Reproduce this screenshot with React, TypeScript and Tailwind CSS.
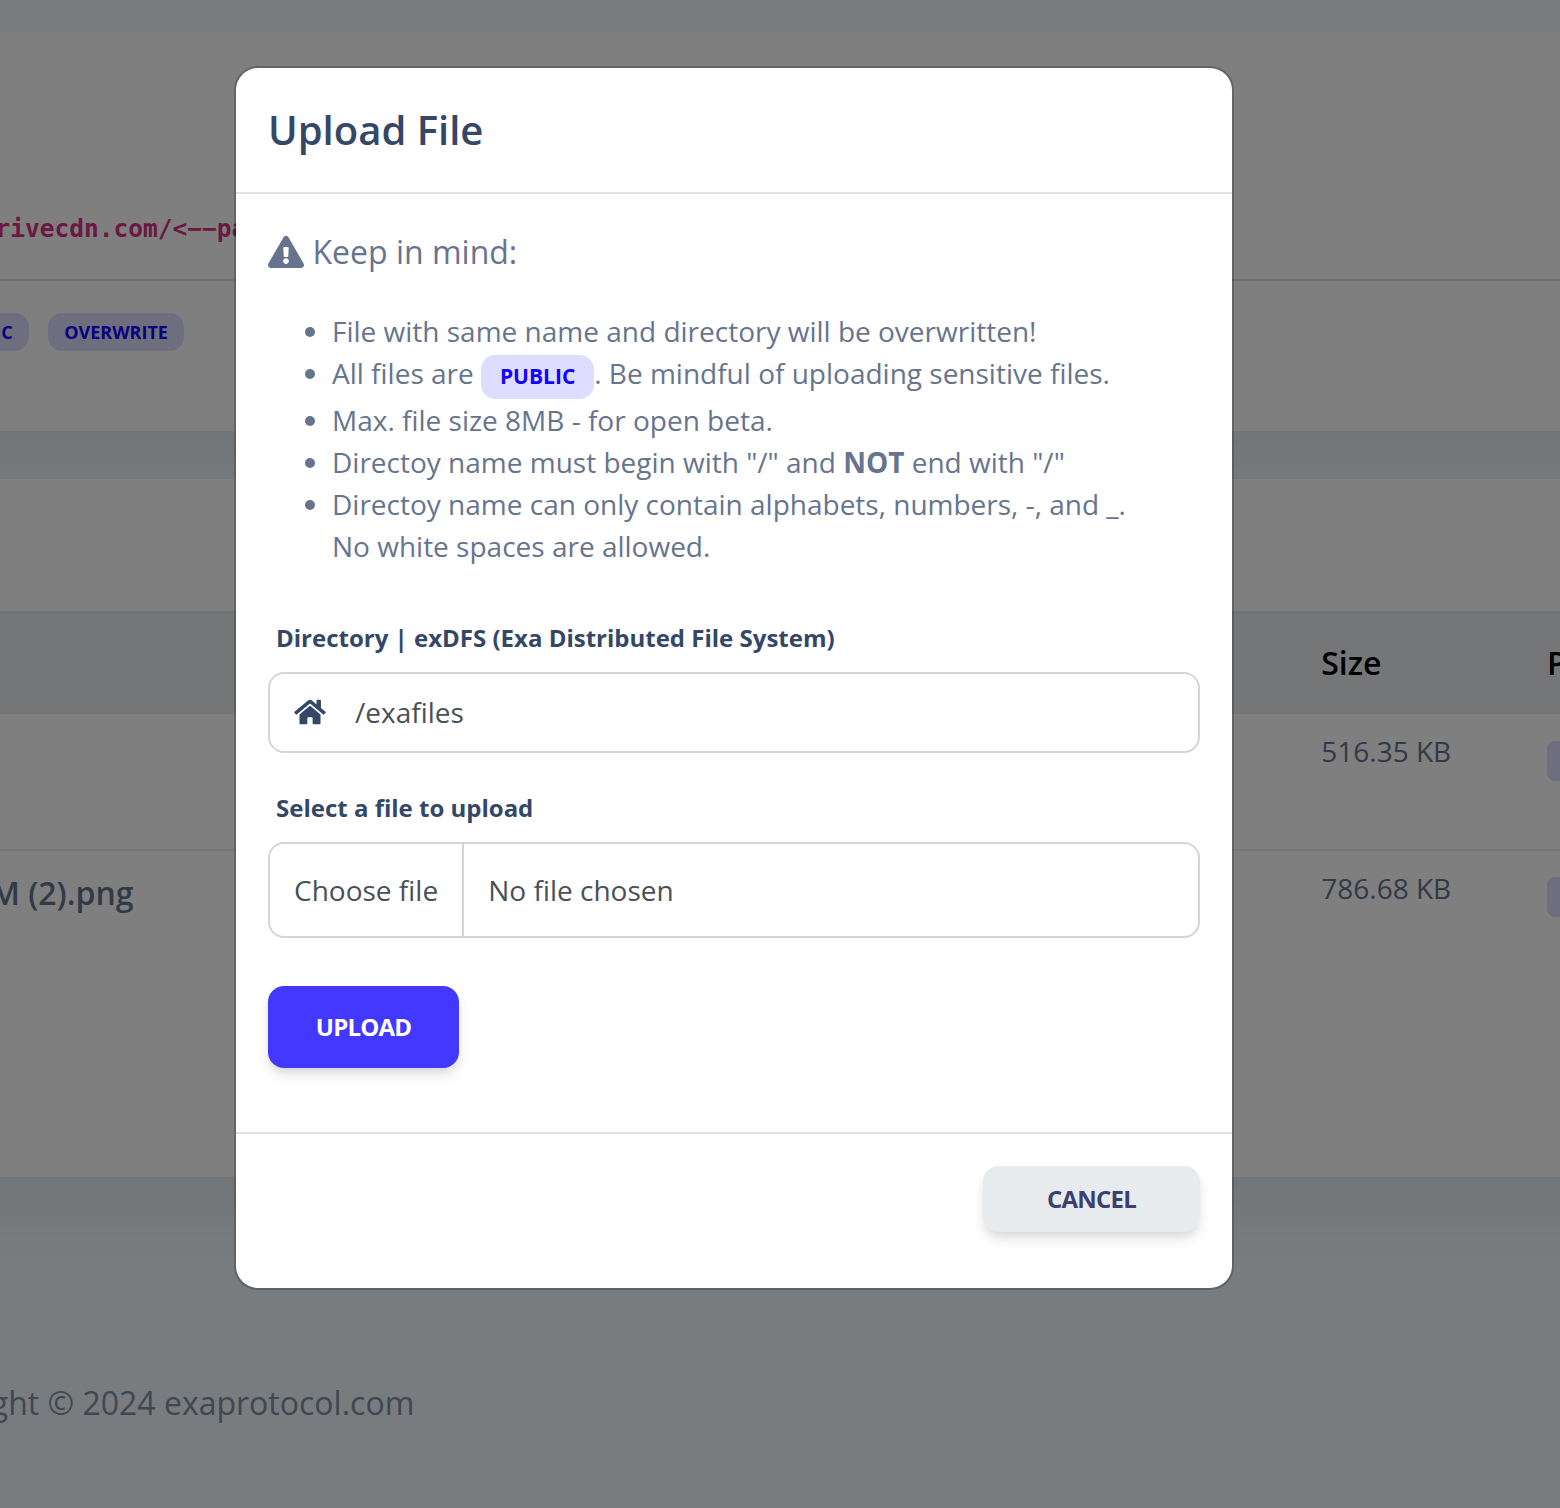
import type { ReactNode } from "react";
import { FaExclamationTriangle, FaHome } from "react-icons/fa";

const cardShadow = "shadow-[0_40px_54px_0_rgba(0,0,0,0.05)]";

function Tag({ children }: { children: ReactNode }) {
  return (
    <span className="inline-block rounded-[14.4px] bg-[#deddff] px-[0.9em] py-[0.55em] text-[18px] leading-none font-bold text-[#1100ff]">
      {children}
    </span>
  );
}

function TableRow({ name, size, className }: { name: string; size: string; className: string }) {
  return (
    <div className={"flex text-[28px] leading-[42px] text-[#67748e] " + className}>
      <div className="flex h-[52px] w-[1321.25px] shrink-0 items-center text-[32px] font-semibold">
        <span className="flex w-[133.5px] justify-end whitespace-nowrap">{name}</span>
      </div>
      <div className="w-[225.75px] shrink-0">{size}</div>
      <div className="mt-[10.5px] h-10 w-[113px] shrink-0 rounded-lg bg-[#deddff]" />
    </div>
  );
}

function Page() {
  return (
    <div className="h-full overflow-hidden bg-[#f2f8fc] pt-8">
      <section className={"-mx-24 h-[399px] bg-white px-24 " + cardShadow}>
        <div className="flex h-[247px] items-end pb-[34px]">
          <code className="-ml-[4.5px] font-['DejaVu_Sans_Mono',monospace] text-[24.5px] leading-[32px] font-bold whitespace-nowrap text-[#d63384]">
            rivecdn.com/&lt;−−pa
          </code>
        </div>
        <div className="-mx-24 h-[2px] bg-[#dcdce2]" />
        <div className="mt-8 flex gap-[19px]">
          <div className="flex w-[29px] shrink-0 justify-end">
            <Tag>PUBLIC</Tag>
          </div>
          <Tag>OVERWRITE</Tag>
        </div>
      </section>

      <section className={"-mx-24 mt-12 h-[698px] bg-white px-24 pt-[132px] " + cardShadow}>
        <div className="-mx-24 flex h-[103px] items-center border-t-2 border-[#dee2e6] bg-[#e9ecef] px-24 pb-[2px] text-[32px] font-semibold text-black">
          <div className="w-[1321.25px] shrink-0" />
          <div className="w-[225.75px] shrink-0">Size</div>
          <div className="shrink-0">Path</div>
        </div>
        <TableRow name="" size="516.35 KB" className="h-[136.5px] border-b-2 border-[#e9ecef] pt-4" />
        <TableRow name="M (2).png" size="786.68 KB" className="pt-4" />
      </section>

      <footer className="mt-[202px] flex">
        <p className="flex w-[414.25px] justify-end text-[32px] leading-[48px] whitespace-nowrap text-[#67748e] opacity-80">
          Copyright © 2024 exaprotocol.com
        </p>
      </footer>
    </div>
  );
}

function UploadDialog() {
  return (
    <div className="flex w-[1000px] flex-col rounded-[24px] border-2 border-black/20 bg-white bg-clip-padding text-[28px] leading-[42px] text-[#67748e]">
      <header className="flex h-[126px] items-center border-b-2 border-[#dee2e6] px-8 pb-[2px]">
        <h5 className="text-[40px] leading-[55px] font-semibold text-[#344767]">Upload File</h5>
      </header>

      <div className="h-[938px] px-8 pt-8">
        <p className="flex h-[52px] items-center gap-[8.5px] text-[32px]">
          <FaExclamationTriangle className="h-8 w-9" />
          Keep in mind:
        </p>
        <ul className="mt-8 list-disc pl-16">
          <li>File with same name and directory will be overwritten!</li>
          <li>
            All files are{" "}
            <span className="inline-block rounded-[14.4px] bg-[#deddff] px-[0.9em] pt-[11px] pb-3 text-[21px] leading-none font-bold text-[#1100ff]">
              PUBLIC
            </span>
            . Be mindful of uploading sensitive files.
          </li>
          <li>Max. file size 8MB - for open beta.</li>
          <li>
            Directoy name must begin with "/" and <b>NOT</b> end with "/"
          </li>
          <li>
            Directoy name can only contain alphabets, numbers, -, and _.
            <br />
            No white spaces are allowed.
          </li>
        </ul>

        <label className="mt-[53px] ml-2 block text-[24px] leading-[36px] font-bold text-[#344767]">
          Directory | exDFS (Exa Distributed File System)
        </label>
        <div className="mt-4 flex h-[81px] items-center rounded-2xl border-2 border-[#d2d6da] px-6 text-[#495057]">
          <FaHome className="mb-px h-7 w-8 text-[#344767]" />
          <span className="mb-[2px] ml-[29px]">/exafiles</span>
        </div>

        <label className="mt-[37px] ml-2 block text-[24px] leading-[36px] font-bold text-[#344767]">
          Select a file to upload
        </label>
        <div className="mt-4 flex h-24 overflow-hidden rounded-2xl border-2 border-[#d2d6da] text-[#495057]">
          <button className="flex w-[194px] items-center border-r-2 border-[#d2d6da] pl-6 whitespace-nowrap">
            Choose file
          </button>
          <span className="flex items-center pl-[24.25px]">No file chosen</span>
        </div>

        <button className="mt-12 h-[82px] w-[191px] rounded-2xl bg-[#4338ff] text-[24px] font-bold tracking-[-0.8px] text-white shadow-[0_8px_14px_-2px_rgba(0,0,0,0.12),0_4px_8px_-2px_rgba(0,0,0,0.07)]">
          UPLOAD
        </button>
      </div>

      <footer className="flex h-[156px] justify-end border-t-2 border-[#dee2e6] px-8 pt-8">
        <button className="h-[66px] w-[217px] rounded-2xl bg-[#e8ebee] text-[24px] font-bold tracking-[-0.8px] text-[#3a416f] shadow-[0_8px_14px_-2px_rgba(0,0,0,0.12),0_4px_8px_-2px_rgba(0,0,0,0.07)]">
          CANCEL
        </button>
      </footer>
    </div>
  );
}

export default function App() {
  return (
    <div className="relative h-[1508px] w-[1560px] overflow-hidden font-['Open_Sans',sans-serif]">
      <Page />
      <div className="absolute inset-0 flex items-start bg-black/50 pt-[66px] pl-[234px]">
        <UploadDialog />
      </div>
    </div>
  );
}
